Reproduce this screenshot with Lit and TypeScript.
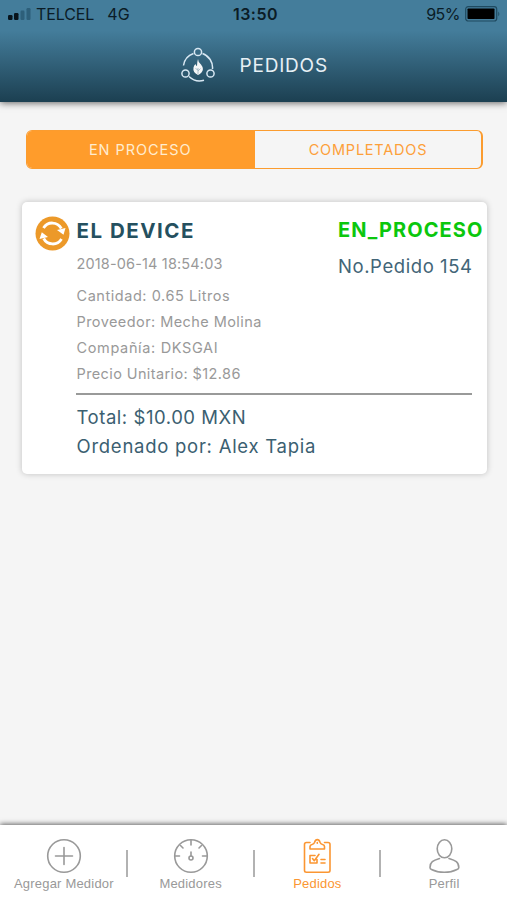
import { LitElement, html, css, svg } from "lit";
import { customElement } from "lit/decorators.js";

const icons = {
  add: svg`<circle cx="18" cy="18" r="16.3"/><path d="M9.500 18h17M18 9.500v17"/>`,
  gauge: svg`<circle cx="18" cy="18" r="16.3"/><path d="M18 2v5M2 18h4.500M34 18h-4.500M7.500 7.500l2.500 2.500M28.500 7.500L26 10M18 14v4"/><circle cx="18" cy="20" r="2"/>`,
  orders: svg`<path d="M11 4.500H7.500Q5.500 4.500 5.500 6.500V32.500Q5.500 34.200 7.500 34.200H29Q31 34.200 31 32.500V6.500Q31 4.500 29 4.500H25.500"/><path d="M11 11V8.500Q11 6.800 13 6.500Q15 6 15.600 4.200Q16.400 1.600 18.300 1.600T21 4.200Q21.600 6 23.600 6.500Q25.500 6.800 25.500 8.500V11Z"/><path d="M18.300 4.600v.6"/><path d="M16 17.500h-5v7.500H18v-3.500M13.500 20.500l1.800 2.200L20 16.300M22 21.500h4M22 25h4"/>`,
  profile: svg`<ellipse cx="18.500" cy="10.800" rx="7.300" ry="9"/><path d="M13.500 20.500C7 22.500 4 24 4 29.500Q4 31 5.500 31.500Q11 34.300 18.300 34.300T31 31.500Q32.800 31 32.800 29.500C32.800 24 29.500 22.500 23 20.500"/>`,
};

@customElement("status-bar")
export class StatusBar extends LitElement {
  static styles = css`
    :host { display: flex; height: 28px; align-items: center; justify-content: space-between; padding: 0 7px 0 8px; box-sizing: border-box; font: 16px Inter, sans-serif; color: #0b1c26; }
    .side { display: flex; align-items: center; width: 160px; }
    .right { justify-content: flex-end; }
    .carrier { margin-left: 5px; letter-spacing: -0.1px; }
    .net { margin-left: 13px; }
    .time { font-weight: 600; letter-spacing: 0.500px; padding-left: 3px; }
    .pct { letter-spacing: -0.500px; }
    .battery { margin-left: 5px; }
    svg { display: block; }
  `;
  render() {
    return html`
      <div class="side">
        <svg width="23" height="14" viewBox="0 0 23 14">
          <rect x="0" y="8" width="4.500" height="5" rx="1.200" fill="#08141c"/>
          <rect x="6" y="6" width="4.500" height="7" rx="1.200" fill="#08141c"/>
          <rect x="12.500" y="3.500" width="4" height="9.500" rx="1.200" fill="#2d5f7a"/>
          <rect x="18.500" y="1" width="4" height="12" rx="1.200" fill="#2d5f7a"/>
        </svg>
        <span class="carrier">TELCEL</span><span class="net">4G</span>
      </div>
      <span class="time">13:50</span>
      <div class="side right">
        <span class="pct">95%</span>
        <svg class="battery" width="35" height="16" viewBox="0 0 35 16">
          <rect x=".7" y=".7" width="31" height="14.300" rx="2.500" fill="none" stroke="#1f4a60" stroke-width="1.200"/>
          <rect x="2.500" y="2.500" width="27" height="10.600" rx=".8" fill="#000"/>
          <path d="M33.300 5.500q2 2.400 0 4.800z" fill="#1f4a60"/>
        </svg>
      </div>`;
  }
}

@customElement("order-card")
export class OrderCard extends LitElement {
  static styles = css`
    :host { display: block; box-sizing: border-box; height: 272px; margin: 33.500px 20px 0 22px; padding: 14px 0 0 13px; background: #fff; border-radius: 5px; box-shadow: 0 0 6px rgba(0,0,0,.22); font-family: Inter, sans-serif; white-space: nowrap; }
    .top { display: grid; grid-template-columns: 41.500px 261.500px auto; height: 60px; }
    .badge { display: block; }
    .name { font-size: 20.500px; line-height: 29px; font-weight: 700; color: #25505f; letter-spacing: 1.500px; }
    .date { font-size: 14.500px; line-height: 20px; color: #999; margin-top: 9px; letter-spacing: 0.150px; }
    .state { font-size: 20px; line-height: 28px; font-weight: 700; color: #0bc70d; letter-spacing: 1.050px; }
    .number { font-size: 18.500px; line-height: 26px; color: #426577; margin-top: 9px; letter-spacing: 0.580px; }
    .lines { margin-left: 41.500px; font-size: 14.500px; line-height: 25.700px; color: #999; padding-top: 7.400px; }
    .l1 { letter-spacing: 0.550px; }
    .l2 { letter-spacing: 0.430px; }
    .l3 { letter-spacing: 0.650px; }
    .l4 { letter-spacing: 0.390px; }
    .rule { height: 2px; background: #999a99; margin: 7px 15px 8px 41px; }
    .sum { margin-left: 41.500px; font-size: 18.500px; line-height: 28.500px; color: #3b6071; }
    .s1 { letter-spacing: 0.550px; }
    .s2 { letter-spacing: 0.740px; }
  `;
  render() {
    return html`
      <div class="top">
        <svg class="badge" width="35" height="35" viewBox="0 0 35 35">
          <circle cx="17.500" cy="17.500" r="17" fill="#ec9929"/>
          <g fill="none" stroke="#fff" stroke-width="2.800"><path d="M8.500 12A10.200 10.200 0 0 1 26.300 12.500"/><path d="M26.500 23A10.200 10.200 0 0 1 8.700 22.500"/></g>
          <path d="M22 14L30.500 12L28.500 18.800ZM13 21L4.500 23L6.800 16.200Z" fill="#fff"/>
        </svg>
        <div><div class="name">EL DEVICE</div><div class="date">2018-06-14 18:54:03</div></div>
        <div><div class="state">EN_PROCESO</div><div class="number">No.Pedido 154</div></div>
      </div>
      <div class="lines">
        <div class="l1">Cantidad: 0.65 Litros</div>
        <div class="l2">Proveedor: Meche Molina</div>
        <div class="l3">Compañía: DKSGAI</div>
        <div class="l4">Precio Unitario: $12.86</div>
      </div>
      <div class="rule"></div>
      <div class="sum"><div class="s1">Total: $10.00 MXN</div><div class="s2">Ordenado por: Alex Tapia</div></div>`;
  }
}

@customElement("tab-bar")
export class TabBar extends LitElement {
  static styles = css`
    :host { display: flex; height: 75px; align-items: flex-start; background: #fff; box-shadow: 0 -1px 5px rgba(0,0,0,.6); font-family: "Liberation Sans", Arial, sans-serif; }
    .item { flex: 1; display: flex; flex-direction: column; align-items: center; padding: 13px 0 0 1px; color: #999; font-size: 13px; line-height: 19px; letter-spacing: 0.200px; white-space: nowrap; }
    .item svg { display: block; fill: none; stroke: currentColor; stroke-width: 1.6; stroke-linecap: round; stroke-linejoin: round; }
    .active { color: #fb9632; }
    .sep { width: 2px; height: 27px; margin: 25px -1px 0; background: #b2b2b2; }
  `;
  item(label: string, icon: unknown, active = false) {
    return html`<div class="item ${active ? "active" : ""}"><svg width="36" height="36" viewBox="0 0 36 36">${icon}</svg><span>${label}</span></div>`;
  }
  render() {
    return html`${this.item("Agregar Medidor", icons.add)}<i class="sep"></i>${this.item("Medidores", icons.gauge)}<i class="sep"></i>${this.item("Pedidos", icons.orders, true)}<i class="sep"></i>${this.item("Perfil", icons.profile)}`;
  }
}

@customElement("app-root")
export class AppRoot extends LitElement {
  static styles = css`
    :host { display: flex; flex-direction: column; height: 900px; overflow: hidden; background: #f5f5f5; font-family: Inter, sans-serif; }
    header { height: 102px; background: linear-gradient(#447d9b 0, #447d9b 30%, #1d4153 98%); box-shadow: 0 1px 7px rgba(0,0,0,.6); }
    .title { display: flex; align-items: center; height: 74px; padding-left: 180px; color: #e7f0f5; font-size: 19px; letter-spacing: 0.800px; }
    .title svg { margin-right: 23.500px; }
    .tabs { display: flex; box-sizing: border-box; height: 39px; margin: 27.500px 24px 0 26px; border: 1.500px solid #fb9c2f; border-right-width: 2.500px; border-radius: 6px; font-size: 14.500px; overflow: hidden; }
    .tab { flex: 1; display: flex; align-items: center; justify-content: center; color: #fda03a; letter-spacing: 0.780px; }
    .on { flex: 0 0 228px; background: #ff9c2b; color: #ffeccf; letter-spacing: 0.950px; }
    .on span { margin-right: 1.500px; }
    .grow { flex: 1; }
  `;
  render() {
    return html`
      <header>
        <status-bar></status-bar>
        <div class="title">
          <svg width="36" height="36" viewBox="0 0 36 36" fill="none" stroke="#d8e8f3" stroke-width="1.500">
            <circle cx="18" cy="5" r="3.600"/><circle cx="5.500" cy="26.500" r="3.600"/><circle cx="30.500" cy="26.500" r="3.600"/>
            <path d="M3.500 18.500A15 15 0 0 1 13.500 6.500M22.500 6.500A15 15 0 0 1 32.500 22M9 29.500A15.500 15.500 0 0 0 24 33.300"/>
            <path d="M18 12Q18 15 21 17.500Q24.500 22 21.500 25.500Q20 27 18 28Q12.500 25.500 13.500 20.500Q14 18 15.500 17Q16 19 17 19Q17 15 18 12Z" fill="#f4f6f7" stroke="none"/>
            <path d="M18 27v-6M18 24l2.500-2.500M18 23l-2.500-1.500" stroke="#8da8b5" stroke-width=".7"/>
          </svg>
          <span>PEDIDOS</span>
        </div>
      </header>
      <div class="tabs"><div class="tab on"><span>EN PROCESO</span></div><div class="tab">COMPLETADOS</div></div>
      <order-card></order-card>
      <div class="grow"></div>
      <tab-bar></tab-bar>`;
  }
}
